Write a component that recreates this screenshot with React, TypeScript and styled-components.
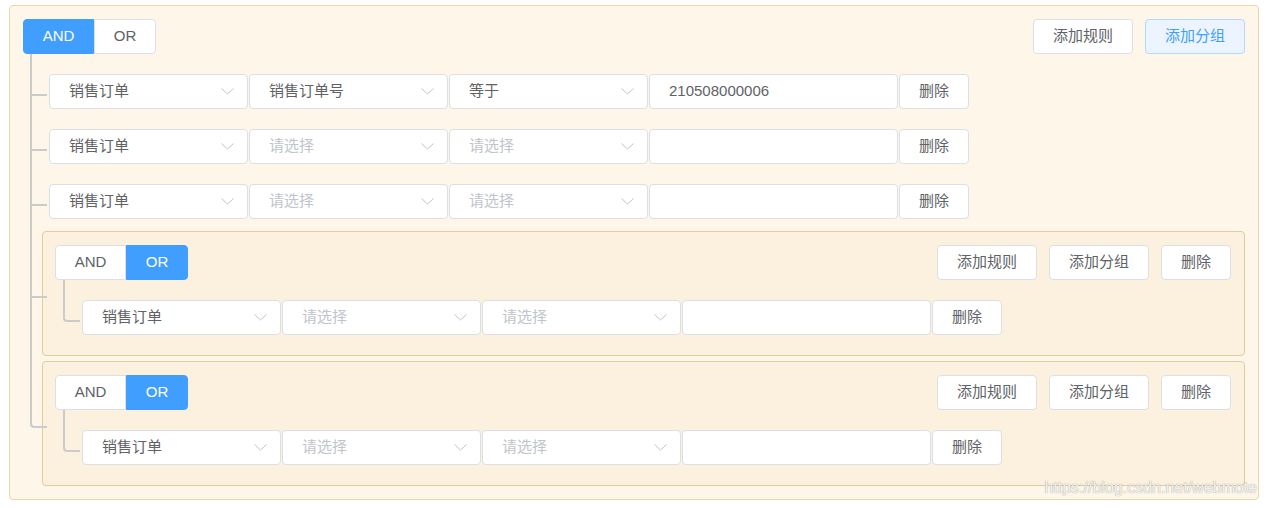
import React from 'react';
import styled, { createGlobalStyle, css } from 'styled-components';

const Global = createGlobalStyle`
  html, body { margin: 0; padding: 0; background: #fff; }
  body {
    font-family: "Liberation Sans", "Noto Sans CJK SC", sans-serif;
    font-size: 15px;
    color: #606266;
  }
  * { box-sizing: border-box; }
`;

const Page = styled.div`
  position: relative;
  padding: 5px 8px 8px 9px;
`;

const GroupBox = styled.div<{ $nested?: boolean }>`
  border: 1px solid ${(p) => (p.$nested ? '#e3cc9b' : '#e9d6ab')};
  background: ${(p) => (p.$nested ? '#fbf1de' : '#fdf6e9')};
  border-radius: 4px;
  padding: ${(p) => (p.$nested ? '13px 13px 13px 12px' : '13px')};
`;

const Header = styled.div`
  display: flex;
  align-items: center;
  justify-content: space-between;
`;

const Toggle = styled.div`
  display: flex;
`;

const Label = styled.span`
  display: block;
  line-height: 20px;
  margin-bottom: 2px;
`;

const ToggleBtn = styled.button<{ $active: boolean; $w: number; $pos: 'first' | 'last' }>`
  width: ${(p) => p.$w}px;
  height: 35px;
  display: flex;
  align-items: center;
  justify-content: center;
  font: inherit;
  font-size: 15px;
  cursor: pointer;
  border: 1px solid ${(p) => (p.$active ? '#409eff' : '#dcdfe6')};
  background: ${(p) => (p.$active ? '#409eff' : '#fff')};
  color: ${(p) => (p.$active ? '#fff' : '#606266')};
  padding: 0;
  border-radius: ${(p) => (p.$pos === 'first' ? '4px 0 0 4px' : '0 4px 4px 0')};
`;

const Actions = styled.div`
  display: flex;
  gap: 12px;
`;

const Btn = styled.button<{ $w?: number; $primary?: boolean }>`
  width: ${(p) => p.$w ?? 100}px;
  height: 35px;
  display: flex;
  align-items: center;
  justify-content: center;
  padding: 0;
  font: inherit;
  font-size: 15px;
  cursor: pointer;
  border-radius: 4px;
  border: 1px solid ${(p) => (p.$primary ? '#b3d8ff' : '#dcdfe6')};
  background: ${(p) => (p.$primary ? '#ecf5ff' : '#fff')};
  color: ${(p) => (p.$primary ? '#409eff' : '#606266')};
`;

const ChildList = styled.div<{ $nested?: boolean }>`
  display: flex;
  flex-direction: column;
  padding-left: ${(p) => (p.$nested ? 1 : 0)}px;
`;

const LINE = '#cbcbcb';

const Child = styled.div<{ $pt: number; $pb: number; $indent: number; $last: boolean }>`
  position: relative;
  padding: ${(p) => p.$pt}px 0 ${(p) => p.$pb}px ${(p) => p.$indent}px;
  &::before {
    content: '';
    position: absolute;
    left: 7px;
    top: 0;
    width: 15px;
    height: calc(50% + ${(p) => (p.$pt - p.$pb) / 2 + 2}px);
    border-left: 2px solid ${LINE};
    border-bottom: 2px solid ${LINE};
    border-bottom-left-radius: ${(p) => (p.$last ? '4px' : '0')};
  }
  ${(p) =>
    !p.$last &&
    css`
      &::after {
        content: '';
        position: absolute;
        left: 7px;
        top: calc(50% + ${(p.$pt - p.$pb) / 2}px);
        bottom: 0;
        border-left: 2px solid ${LINE};
      }
    `}
`;

const Row = styled.div`
  display: flex;
  gap: 1px;
`;

const SelectBox = styled.div<{ $placeholder?: boolean }>`
  width: 199px;
  height: 35px;
  display: flex;
  align-items: center;
  justify-content: space-between;
  padding: 0 13px 0 19px;
  background: #fff;
  border: 1px solid #dcdfe6;
  border-radius: 4px;
  color: ${(p) => (p.$placeholder ? '#c0c4cc' : '#606266')};
`;

const InputBox = styled.div`
  width: 249px;
  height: 35px;
  display: flex;
  align-items: center;
  padding: 0 19px;
  background: #fff;
  border: 1px solid #dcdfe6;
  border-radius: 4px;
  color: #606266;
`;

const Watermark = styled.div`
  position: absolute;
  right: 10px;
  top: 479px;
  font-family: "Liberation Sans", Arial, sans-serif;
  font-size: 16px;
  line-height: 18px;
  color: rgba(255, 255, 255, 0.9);
  text-shadow: 0 0 1px rgba(90, 90, 90, 0.75);
  pointer-events: none;
`;

type RuleNode = { kind: 'rule'; field: string; sub?: string; op?: string; value?: string };
type GroupNode = { kind: 'group'; logic: 'AND' | 'OR'; children: Node[] };
type Node = RuleNode | GroupNode;

const Chevron = () => (
  <svg width="13" height="7" viewBox="0 0 13 7" fill="none">
    <path d="M0.5 0.5 L6.5 6 L12.5 0.5" stroke="#c0c4cc" strokeWidth="1" />
  </svg>
);

const Select = ({ value }: { value?: string }) => (
  <SelectBox $placeholder={!value}>
    <Label>{value ?? '请选择'}</Label>
    <Chevron />
  </SelectBox>
);

const RuleRow = ({ r }: { r: RuleNode }) => (
  <Row>
    <Select value={r.field} />
    <Select value={r.sub} />
    <Select value={r.op} />
    <InputBox>
      <Label>{r.value ?? ''}</Label>
    </InputBox>
    <Btn $w={70}>
      <Label>删除</Label>
    </Btn>
  </Row>
);

const GroupView = ({ g, nested }: { g: GroupNode; nested?: boolean }) => (
  <GroupBox $nested={nested}>
    <Header>
      <Toggle>
        <ToggleBtn $w={71} $pos="first" $active={g.logic === 'AND'}>
          <Label>AND</Label>
        </ToggleBtn>
        <ToggleBtn $w={62} $pos="last" $active={g.logic === 'OR'}>
          <Label>OR</Label>
        </ToggleBtn>
      </Toggle>
      <Actions>
        <Btn>
          <Label>添加规则</Label>
        </Btn>
        <Btn $primary={!nested}>
          <Label>添加分组</Label>
        </Btn>
        {nested && (
          <Btn $w={70}>
            <Label>删除</Label>
          </Btn>
        )}
      </Actions>
    </Header>
    <ChildList $nested={nested}>
      {g.children.map((c, i) => {
        const last = i === g.children.length - 1;
        if (c.kind === 'rule') {
          return (
            <Child key={i} $pt={i === 0 ? 20 : 13} $pb={7} $indent={26} $last={last}>
              <RuleRow r={c} />
            </Child>
          );
        }
        return (
          <Child key={i} $pt={i === 0 ? 20 : 5} $pb={0} $indent={19} $last={last}>
            <GroupView g={c} nested />
          </Child>
        );
      })}
    </ChildList>
  </GroupBox>
);

const data: GroupNode = {
  kind: 'group',
  logic: 'AND',
  children: [
    { kind: 'rule', field: '销售订单', sub: '销售订单号', op: '等于', value: '210508000006' },
    { kind: 'rule', field: '销售订单' },
    { kind: 'rule', field: '销售订单' },
    { kind: 'group', logic: 'OR', children: [{ kind: 'rule', field: '销售订单' }] },
    { kind: 'group', logic: 'OR', children: [{ kind: 'rule', field: '销售订单' }] },
  ],
};

export default function App() {
  return (
    <>
      <Global />
      <Page>
        <GroupView g={data} />
        <Watermark>https://blog.csdn.net/webmote</Watermark>
      </Page>
    </>
  );
}
